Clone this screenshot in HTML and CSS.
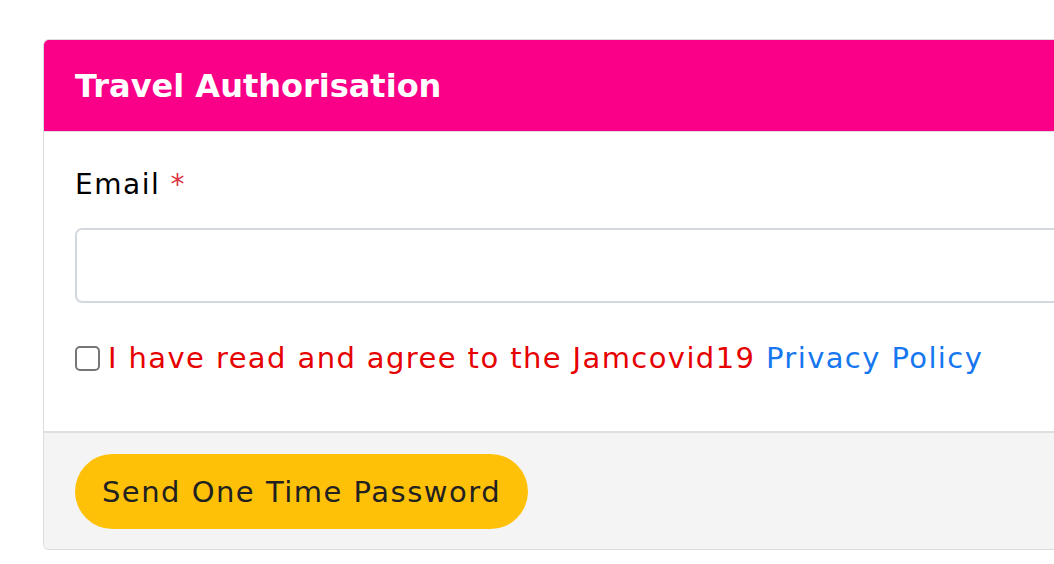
FILE: index.html
```html
<!DOCTYPE html>
<html lang="en">
<head>
<meta charset="UTF-8">
<meta name="viewport" content="width=device-width, initial-scale=1.0">
<title>Travel Authorisation</title>
<link rel="stylesheet" href="styles.css">
</head>
<body>
<div class="card">
    <div class="card-header">
        <h2>Travel Authorisation</h2>
    </div>
    <div class="card-body">
        <label class="field-label" for="email">Email <span class="required">*</span></label>
        <input type="email" id="email" class="text-input">
        <div class="agree-row">
            <input type="checkbox" id="agree" class="agree-box">
            <label for="agree" class="agree-text">I have read and agree to the Jamcovid19 <a href="#" class="policy-link">Privacy Policy</a></label>
        </div>
    </div>
    <div class="card-footer">
        <button class="send-btn">Send One Time Password</button>
    </div>
</div>
</body>
</html>
```

FILE: styles.css
```css
html, body {
    overflow: hidden;
}
body {
    margin: 0;
    padding: 39px 0 0 43px;
    font-family: "DejaVu Sans", "Noto Sans", sans-serif;
    background-color: #fff;
    color: #000;
}
.card {
    width: 1011px;
    border: 1px solid #dcdcdc;
    border-right: none;
    border-radius: 6px 0 0 6px;
    overflow: hidden;
}
.card-header {
    height: 92px;
    box-sizing: border-box;
    padding: 0 31px;
    display: flex;
    align-items: center;
    background-color: #fa0088;
    border-bottom: 1px solid #e4dde2;
}
.card-header h2 {
    margin: 0;
    font-size: 32px;
    font-weight: 700;
    color: #fff;
}
.card-body {
    height: 299px;
    box-sizing: border-box;
    padding: 33px 0 0 31px;
}
.field-label {
    display: block;
    font-size: 28px;
    letter-spacing: 1.5px;
    line-height: 40px;
}
.required {
    color: #dc3545;
}
.text-input {
    display: block;
    margin-top: 23px;
    width: calc(100% + 20px);
    height: 75px;
    box-sizing: border-box;
    border: 2px solid #d3d8de;
    border-radius: 7px;
}
.agree-row {
    display: flex;
    align-items: center;
    margin-top: 38px;
}
.agree-box {
    appearance: none;
    flex: none;
    width: 25px;
    height: 25px;
    margin: 0 8px 0 0;
    border: 2px solid #767676;
    border-radius: 5px;
    background: #fff;
}
.agree-text {
    font-size: 29px;
    letter-spacing: 1.4px;
    color: #e60000;
    white-space: nowrap;
}
.policy-link {
    color: #1677ef;
    text-decoration: none;
}
.card-footer {
    height: 118px;
    box-sizing: border-box;
    padding: 21px 31px 0;
    background-color: #f4f4f4;
    border-top: 2px solid #dedfe1;
}
.send-btn {
    width: 453px;
    height: 75px;
    padding: 0;
    border: none;
    border-radius: 38px;
    background-color: #ffc107;
    color: #212121;
    font-family: "DejaVu Sans", "Noto Sans", sans-serif;
    font-size: 29px;
    letter-spacing: 1.5px;
    cursor: pointer;
}
```
